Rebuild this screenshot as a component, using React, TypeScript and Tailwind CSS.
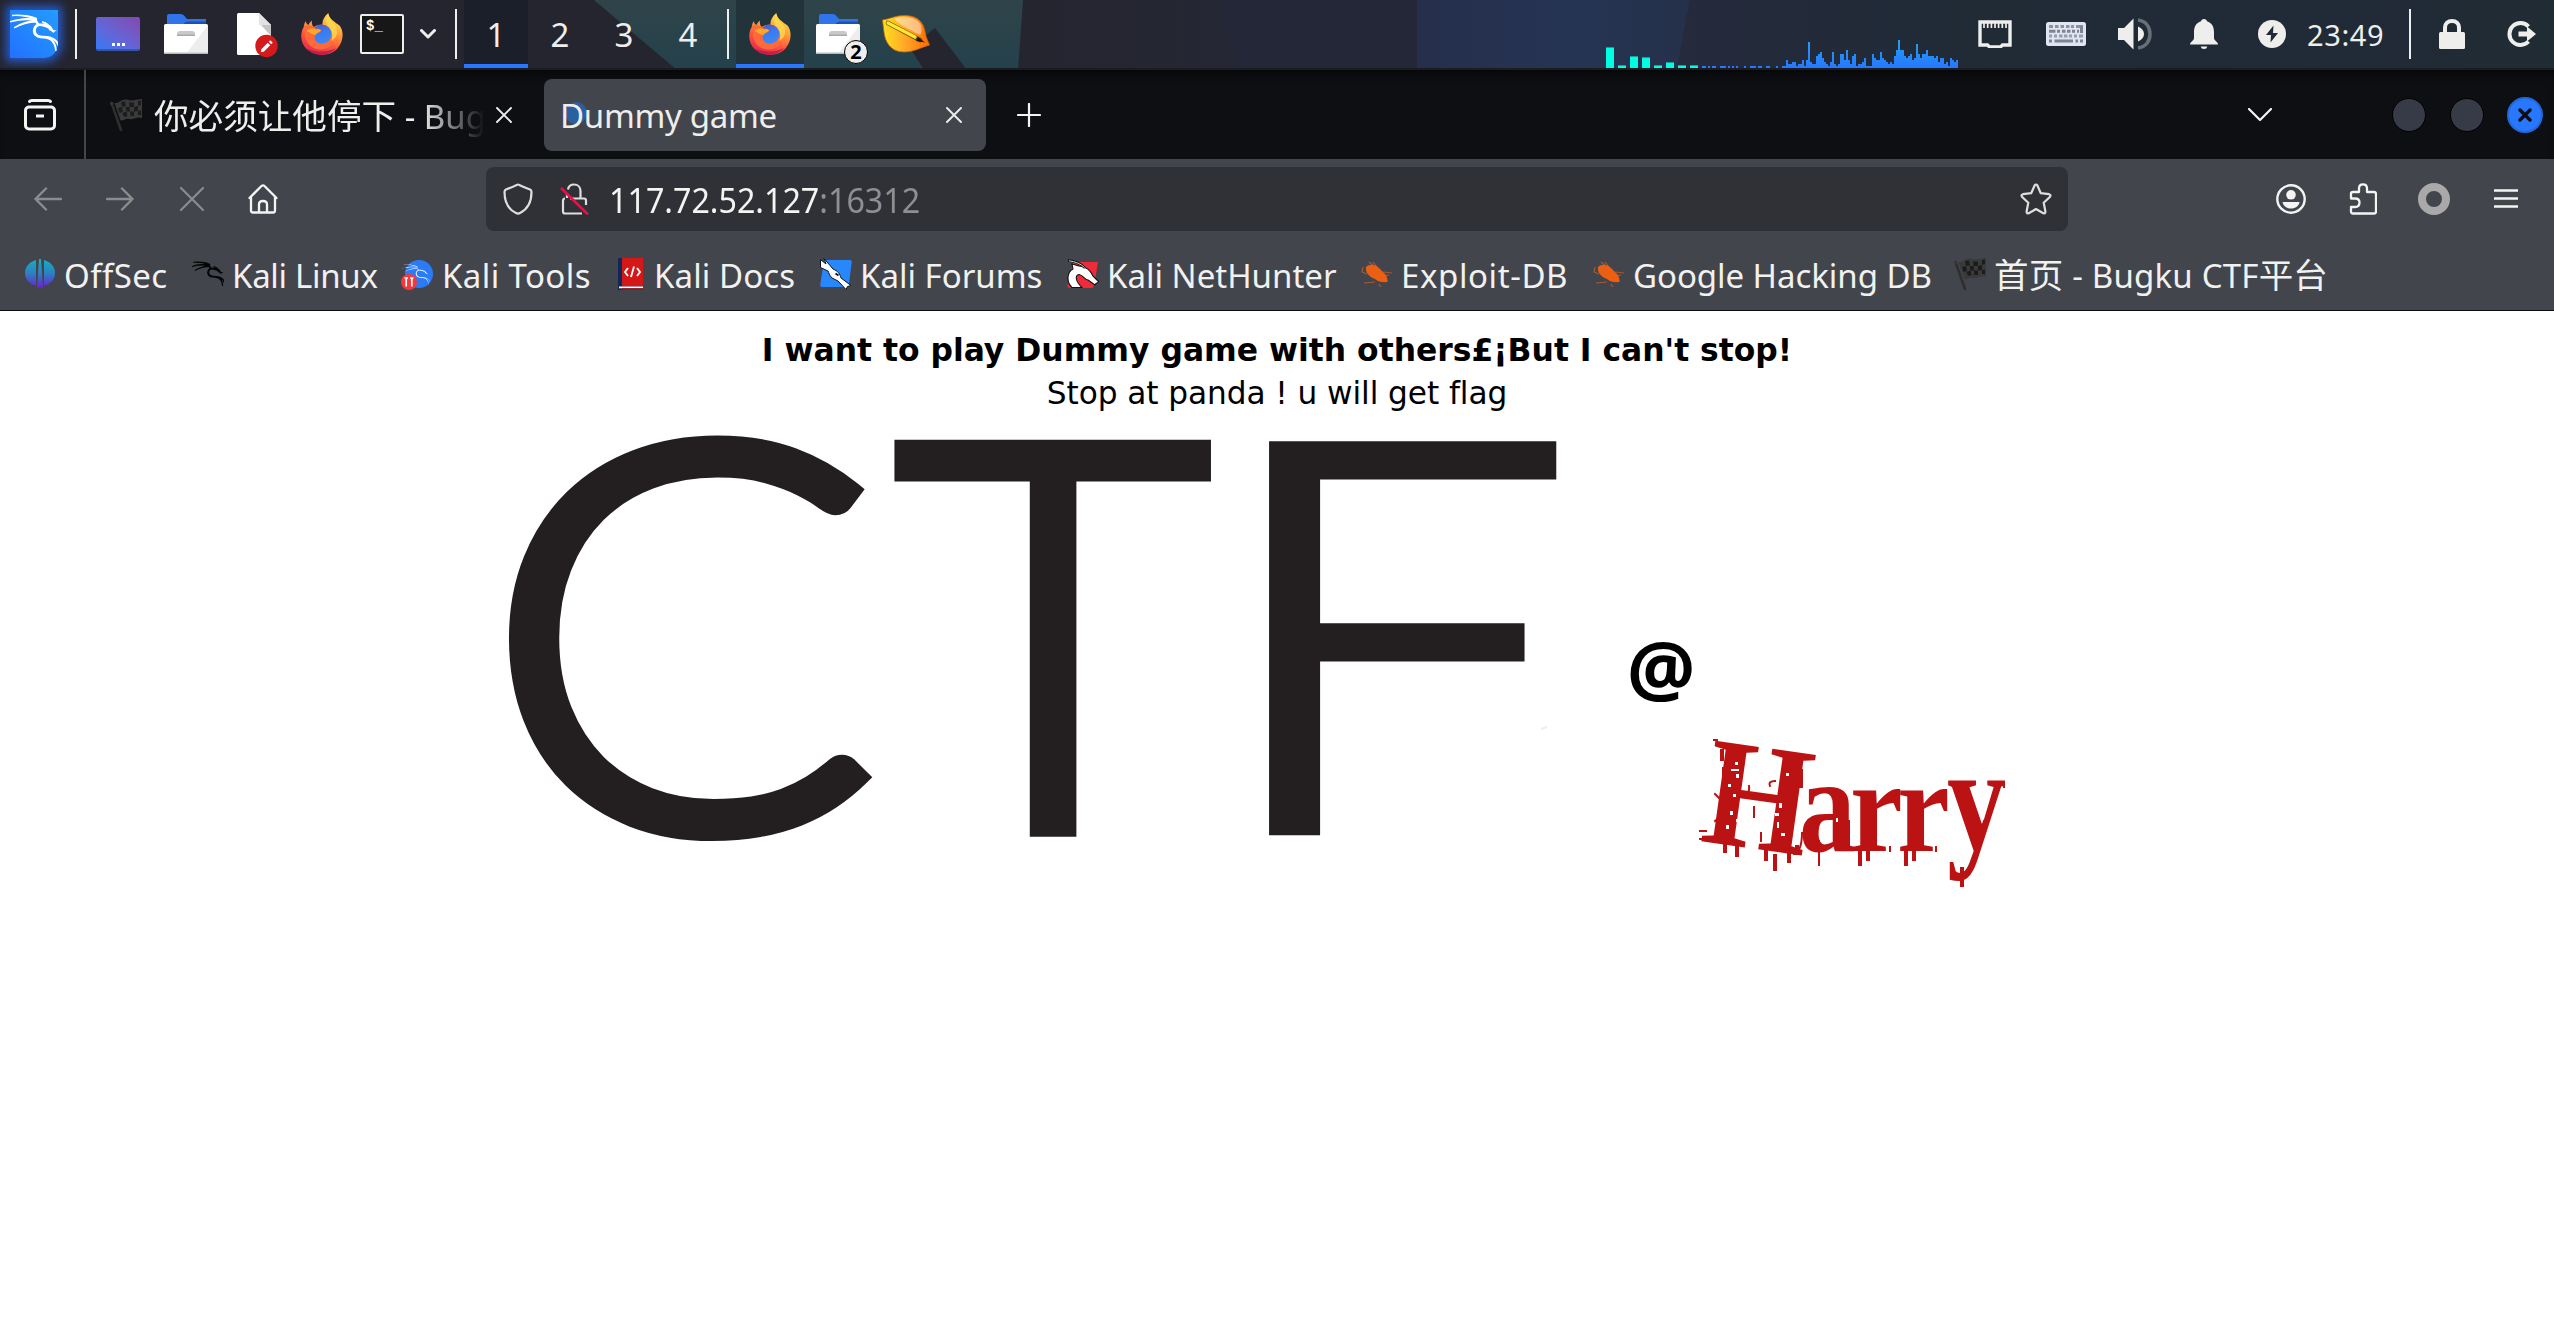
import type { ReactNode } from "react";
import { SiKalilinux } from "react-icons/si";

const UI_FONT = "font-['Noto_Sans','Noto_Sans_CJK_SC',sans-serif]";

/* Heights of the CPU history, one entry per 2px column. */
const LOAD = [
  1, 1, 0, 1, 0, 1, 1, 0, 0, 1, 1, 1, 0, 1, 0, 1, 0, 1, 0, 0, 0, 1, 0, 0, 1, 1, 1, 0, 1, 1, 0, 0, 1, 1, 0, 0, 0, 1, 0, 0, 1, 1,
  4, 2, 2, 3, 3, 1, 2, 2, 4, 1, 4, 13, 3, 2, 2, 6, 7, 8, 5, 3, 2, 1, 3, 8, 2, 1, 2, 7, 7, 4, 9, 4, 2, 6, 7, 1, 2, 2, 3, 5, 1, 1, 1,
  7, 5, 4, 4, 8, 5, 4, 3, 2, 3, 2, 6, 9, 14, 9, 9, 6, 5, 6, 7, 4, 5, 12, 7, 5, 7, 7, 9, 6, 6, 6, 5, 6, 3, 5, 5, 2, 3, 1, 5, 4, 3, 4,
];
const CORES = [21, 3, 12, 11, 3, 6, 3, 3];

function Firefox({ className }: { className?: string }) {
  return (
    <svg viewBox="0 0 42 42" className={className}>
      <defs>
        <linearGradient id="ffBody" x1="0.75" y1="0" x2="0.3" y2="1">
          <stop offset="0" stopColor="#ffe05a" />
          <stop offset="0.35" stopColor="#ffa436" />
          <stop offset="0.65" stopColor="#ff5a3c" />
          <stop offset="1" stopColor="#e0264f" />
        </linearGradient>
        <linearGradient id="ffGlobe" x1="0" y1="0" x2="0.3" y2="1">
          <stop offset="0" stopColor="#5a4fc4" />
          <stop offset="0.5" stopColor="#3a7cf0" />
          <stop offset="1" stopColor="#3f86f2" />
        </linearGradient>
      </defs>
      <path fill="url(#ffBody)" d="M4.7 8C3 11 3 12 2.7 14C-1 20-1 30 6 36.500C14 44 29 43.500 36 36C43 28.500 43 18 38.500 12.500C34 9 28 6 27.300 0C23 3.500 21 8 21.500 12C18 11 15 12.500 13 14C11 13 10.500 10 11 7.500C9 9 8 10.500 7.500 12C6 11 5 10 4.700 8Z" />
      <circle cx="20.700" cy="21.500" r="10" fill="url(#ffGlobe)" />
      <path fill="#ff6a3a" d="M3 13C6 11.500 11 12 14.500 15.500C17 15.500 19.500 16 20 17.500C19 20 15 20 14 22.500C12 27 17 31.500 22 30.500C28 29.500 31 25 30 20C33 24 33 30 28 34C20 39 8 36 5 26C3.500 21 3 17 3 13Z" />
      <path fill="#ffa62b" d="M5.500 18C8 14.500 12 14.500 14.500 16.500C17 16 19.500 16.500 20 17.500C19 19.500 15.500 19.500 14.500 22C11 22 9 19.500 5.500 18Z" />
      <path fill="#ffd84f" opacity="0.8" d="M27.300 1C24 5 24 10 27 13C31 17 32.500 22 30 28C34 26 37 22 36 16C35 10 29 8 27.300 1Z" />
      <path fill="#b5174f" opacity="0.75" d="M5 35C10 38 24 41 35 35C29 43.500 13 44.500 5 35Z" />
    </svg>
  );
}

function Folder({ className }: { className?: string }) {
  return (
    <svg viewBox="0 0 44 40" className={className}>
      <path fill="#2f74ea" d="M3 2Q3 0 5 0H17Q19 0 20 1.500L23 5H42V12H3Z" />
      <path fill="#1d4fae" d="M20 9L23 7.500H42V11H20Z" />
      <rect y="10" width="44" height="30" rx="1.500" fill="#fff" />
      <path fill="#ededed" d="M44 11V38.500H23Z" />
      <rect y="38.500" width="44" height="1.500" rx="0.700" fill="#b9b9bc" />
      <path d="M13 20Q13 17 16 17H28Q31 17 31 20V22H13Z" fill="#c9c9c9" />
      <rect x="13" y="20.500" width="18" height="1.500" fill="#a9a9a9" />
    </svg>
  );
}

function Flag() {
  return (
    <svg viewBox="0 0 32 32" className="h-8 w-8 shrink-0">
      <path d="M1.500 4L11 31" stroke="#2f2f2f" strokeWidth="2.600" strokeLinecap="round" />
      <circle cx="1.800" cy="4.500" r="1.700" fill="#383838" />
      <path fill="#3a3a3a" d="M4.500 4C9 5 12-1 18 1C23 2.500 27 0 32 0V19C27 17 24 21 19 20C15 19 14 22 10.500 21.500Z" />
      <path fill="#1c1c1d" d="M11 3L15 2.500L16 7L12 8ZM19 3.500L24 3.500L24 8L19.500 8ZM28 2L31 1.500V6L28 7ZM15.500 8L19.500 8L20 12.500L16.500 12.500ZM24 8L28 7V12L24 12.500ZM8 9L12 8L13 13L9.500 14ZM12.500 14L16.500 12.500L17.500 17L14 18ZM20 12.500L24 12.500V17L20.500 17ZM28 12L31 11.500V16L28 16Z" />
    </svg>
  );
}

function Taskbar() {
  return (
    <header className="relative h-[70px] overflow-hidden bg-[#25252f]">
      <svg viewBox="0 0 2554 70" className="absolute inset-0 h-[70px] w-full">
        <defs>
          <linearGradient id="teal" x1="0" y1="0" x2="0" y2="1">
            <stop offset="0" stopColor="#2f4449" />
            <stop offset="1" stopColor="#24414c" />
          </linearGradient>
          <linearGradient id="mid" x1="0" x2="1">
            <stop offset="0" stopColor="#25252f" />
            <stop offset="1" stopColor="#232838" />
          </linearGradient>
          <linearGradient id="navy" x1="0" x2="1">
            <stop offset="0" stopColor="#252f4c" />
            <stop offset="0.600" stopColor="#263453" />
            <stop offset="1" stopColor="#25314a" />
          </linearGradient>
          <linearGradient id="slate" x1="0" x2="1">
            <stop offset="0" stopColor="#252a3c" />
            <stop offset="0.350" stopColor="#202b36" />
            <stop offset="0.800" stopColor="#212a37" />
            <stop offset="1" stopColor="#202c33" />
          </linearGradient>
        </defs>
        <rect x="1018" width="400" height="70" fill="url(#mid)" />
        <path fill="url(#teal)" d="M594 0H1023L1018 70H677Z" />
        <path fill="#25252f" d="M935 28L967 70H924L910 48Z" />
        <path fill="#232737" d="M1220 0H1417V70H1240Z" />
        <path fill="url(#navy)" d="M1417 0H1690L1677 70H1417Z" />
        <path fill="url(#slate)" d="M1690 0H2554V70H1677Z" />
        <rect y="68" width="2554" height="2" fill="#1c1d23" />
      </svg>

      <div className="relative flex h-[68px] items-center pl-[10px]">
        <div className="relative h-12 w-12 rounded-br-[14px] bg-linear-to-tr from-[#2470ff] to-[#259cff] shadow-[0_0_10px_4px_rgba(38,110,255,0.75)]">
          <SiKalilinux className="absolute -top-px left-0 h-12 w-12 stroke-white stroke-[0.7] text-white" />
        </div>
        <i className="ml-[17px] h-[50px] w-[2px] bg-[#eeeeec]" />

        <div className="ml-[19px] flex h-[34px] w-11 items-end justify-center gap-[2px] rounded-[2px] border-b-2 border-[#3457a8] bg-linear-to-tr from-[#2e79f5] to-[#8347b0] pb-[3px]">
          <i className="h-[3px] w-[3px] bg-white" />
          <i className="h-[3px] w-[3px] bg-white" />
          <i className="h-[3px] w-[3px] bg-white" />
        </div>
        <Folder className="ml-6 h-10 w-11" />
        <svg viewBox="0 0 41 44" className="ml-[29px] mt-[2px] h-11 w-[41px]">
          <path fill="#fff" d="M1.500 0H22L34 12V42H1.500Q0 42 0 40.500V1.500Q0 0 1.500 0Z" />
          <path fill="#e2e2e2" d="M22 0L34 12H22Z" />
          <path fill="#c4c4c4" d="M24 12H34V23Z" />
          <circle cx="29.500" cy="33" r="11.200" fill="#d41a1a" />
          <path d="M25.500 37.500L32 31" stroke="#fff" strokeWidth="3.600" />
          <path d="M33 30L34.500 28.500" stroke="#fff" strokeWidth="3.600" />
          <path d="M23.800 39.300L24.500 36L27 38.600Z" fill="#fff" />
        </svg>
        <Firefox className="ml-[23px] h-[42px] w-[42px]" />
        <div className="ml-[17px] h-10 w-11 rounded-[2px] border-2 border-[#eeeeec] bg-[#171717] pl-1 pt-[3px] font-['Liberation_Mono',monospace] text-[14px] leading-[14px] font-bold text-white">
          $_
        </div>
        <svg viewBox="0 0 16 10" className="ml-4 h-[10px] w-4">
          <path d="M1.500 1.500L8 8L14.500 1.500" fill="none" stroke="#eeeeec" strokeWidth="3" strokeLinecap="round" strokeLinejoin="round" />
        </svg>
        <i className="ml-[19px] h-[50px] w-[2px] bg-[#eeeeec]" />

        <nav className="ml-[7px] flex h-[68px] text-[33px] text-[#eeeeec]">
          <span className="flex w-16 items-center justify-center border-b-4 border-[#2777ff] bg-[#1b1f29] pt-1.5">1</span>
          <span className="flex w-16 items-center justify-center border-b-4 border-transparent pt-1.5">2</span>
          <span className="flex w-16 items-center justify-center border-b-4 border-transparent pt-1.5">3</span>
          <span className="flex w-16 items-center justify-center border-b-4 border-transparent pt-1.5">4</span>
        </nav>
        <i className="ml-[7px] h-[50px] w-[2px] bg-[#eeeeec]" />

        <div className="ml-[7px] flex h-[68px] w-[68px] items-center justify-center border-b-4 border-[#2777ff] bg-[#22343a] pt-1">
          <Firefox className="h-[42px] w-[42px]" />
        </div>
        <div className="relative flex h-[68px] w-[68px] items-center justify-center">
          <Folder className="h-10 w-11" />
          <span className="absolute left-10 top-10 flex h-6 w-6 items-center justify-center rounded-full border border-black bg-[#eeeeec] text-[20px] leading-none font-bold text-black">
            2
          </span>
        </div>
        <svg viewBox="0 0 48 38" className="ml-[10px] h-[38px] w-12">
          <defs>
            <linearGradient id="leaf" x1="0" y1="0.500" x2="1" y2="0.500">
              <stop offset="0" stopColor="#ffe21f" />
              <stop offset="0.500" stopColor="#ffa528" />
              <stop offset="1" stopColor="#ff6a00" />
            </linearGradient>
          </defs>
          <path fill="url(#leaf)" stroke="#c96a08" strokeWidth="0.800" d="M0.500 5C8 4 14 0 24 0.500C37 1 42 9 43 17C44 23 46 26 47.500 30C40 32 32 37 22 37C8 37 3 26 2 17Z" />
          <path fill="#fff" opacity="0.450" d="M12 4C22 0 34 2 39 10C40 14 40 18 38 20C30 16 18 10 12 4Z" />
          <path d="M6 8L38 25" stroke="#6b4c10" strokeWidth="4.600" strokeLinecap="round" />
          <path d="M6 8L33 22" stroke="#ffe72d" strokeWidth="3.300" strokeLinecap="round" />
          <path d="M36 22L43 27.500L34 26Z" fill="#1c1c1c" />
        </svg>

        <svg viewBox="0 0 352 68" className="ml-[676px] h-[68px] w-[352px]" shapeRendering="crispEdges">
          <defs>
            <linearGradient id="load" gradientUnits="userSpaceOnUse" x1="0" y1="40" x2="0" y2="68">
              <stop offset="0" stopColor="#22a2f2" />
              <stop offset="1" stopColor="#2777ff" />
            </linearGradient>
          </defs>
          {CORES.map((h, i) => (
            <g key={i}>
              <rect x={i * 12} y={68 - h} width="8" height={h} fill="#00ffe0" />
              <rect x={i * 12} y={68 - h} width="8" height="1" fill="#159f97" />
            </g>
          ))}
          {LOAD.map((h, i) => (
            <rect key={i} x={96 + i * 2} y={68 - h * 2} width="2" height={h * 2} fill="url(#load)" />
          ))}
        </svg>

        <svg viewBox="0 0 34 28" className="ml-5 h-7 w-[34px]">
          <path d="M2 2H32V25H24.500L22.500 27H11.500L9.500 25H2Z" fill="none" stroke="#eeeeec" strokeWidth="3.400" />
          <path d="M6 3V8M9.700 3V8M13.400 3V8M17 3V8M20.600 3V8M24.300 3V8M28 3V8" stroke="#eeeeec" strokeWidth="1.700" />
        </svg>
        <svg viewBox="0 0 40 24" className="ml-[34px] h-6 w-10">
          <rect width="40" height="24" rx="2.500" fill="#dfe5f1" />
          <g fill="none" stroke="#7f8493" strokeWidth="3">
            <path d="M3 4.500H7M9 4.500H12.500M14.500 4.500H18M20 4.500H23.500M25 4.500H28M30 4.500H37" strokeOpacity="0.850" />
            <path d="M3 9.200H9.500M11 9.200H14M16 9.200H19.500M21 9.200H24.500M26 9.200H29M31 9.200H33M35.500 4V11" />
            <path d="M3 14H6M8 14H11M13 14H16.500M18 14H21.500M23 14H26M28 14H31M33 14H37" strokeOpacity="0.750" />
            <path d="M3 19H6M8.500 19H27M29.500 19H32M34 19H37" />
          </g>
        </svg>
        <svg viewBox="0 0 34 32" className="ml-8 h-8 w-[34px]">
          <path fill="#eeeeec" d="M0 10H6L15.500 0.500V31.500L6 22H0Z" />
          <path fill="#eeeeec" d="M20 8.500C24 10 26 13 26 16S24 22 20 23.500Z" />
          <path d="M20 2C28 3 32 9 32 16S28 29 20 30" fill="none" stroke="#eeeeec" strokeOpacity="0.350" strokeWidth="3.500" />
        </svg>
        <svg viewBox="0 0 28 30" className="ml-[38px] h-[30px] w-7">
          <path fill="#eeeeec" d="M14 0C15.800 0 16.800 1 17 2.300C22 4 24 8 24 13V19C24 21.500 28 23 28 25.500H0C0 23 4 21.500 4 19V13C4 8 6 4 11 2.300C11.200 1 12.200 0 14 0ZM10.800 27.500H17.200C17 29.200 15.700 30 14 30S11 29.200 10.800 27.500Z" />
        </svg>
        <svg viewBox="0 0 28 28" className="ml-10 h-7 w-7">
          <circle cx="14" cy="14" r="14" fill="#eeeeec" />
          <path fill="#212a36" d="M15.500 5.500L8 15H13L12.500 22.500L20 13H15Z" />
        </svg>
        <span className="ml-[21px] w-[79px] text-[29px] leading-none tracking-[0.6px] whitespace-nowrap text-[#eeeeec]">23:49</span>
        <i className="ml-[23px] h-[50px] w-[2px] bg-[#eeeeec]" />
        <svg viewBox="0 0 26 30" className="ml-7 h-[30px] w-[26px]">
          <rect y="13" width="26" height="17" rx="1.500" fill="#eeeeec" />
          <path d="M6 14V8.500C6 4.500 9 2 13 2S20 4.500 20 8.500V14" fill="none" stroke="#eeeeec" strokeWidth="4" />
        </svg>
        <svg viewBox="0 0 29 26" className="ml-[42px] h-[26px] w-[29px]">
          <path d="M21.500 5.500A11 11 0 1 0 21.500 20.500" fill="none" stroke="#eeeeec" strokeWidth="4" />
          <path fill="#eeeeec" d="M11.500 10.500H20V5.500L29 13L20 20.500V15.500H11.500Z" />
        </svg>
      </div>
    </header>
  );
}

function Cross({ className }: { className?: string }) {
  return (
    <svg viewBox="0 0 16 16" className={className}>
      <path d="M1 1L15 15M15 1L1 15" stroke="currentColor" strokeWidth="1.900" strokeLinecap="round" />
    </svg>
  );
}

function TabStrip() {
  return (
    <div className="flex h-[89px] items-center bg-[#0e0f13] text-[#eeeeec] shadow-[inset_0_10px_10px_-6px_rgba(0,0,0,0.6)]">
      <svg viewBox="0 0 32 32" className="ml-6 h-8 w-8">
        <path d="M5.500 2.500Q6 1.500 8 1.500H24Q26 1.500 26.500 2.500" fill="none" stroke="#f4f4f3" strokeWidth="3" strokeLinecap="round" />
        <rect x="1.500" y="8" width="29" height="22" rx="3.500" fill="none" stroke="#f4f4f3" strokeWidth="3" />
        <rect x="12" y="15.500" width="8" height="3" fill="#f4f4f3" />
      </svg>
      <i className="ml-7 h-full w-[2px] bg-[#44454b]" />
      <div className="ml-6 flex w-[402px] items-center">
        <Flag />
        <span className="ml-3 w-[334px] overflow-hidden pt-[3px] text-[33px] leading-[48px] whitespace-nowrap [mask-image:linear-gradient(to_right,black_80%,transparent_99%)]">
          <span className="text-[34.6px]">你必须让他停下</span> - Bugku CTF
        </span>
        <Cross className="ml-2 h-4 w-4" />
      </div>
      <div className="ml-8 flex h-[72px] w-[442px] items-center rounded-lg bg-[#43454d]">
        <span className="relative ml-4 flex-1 pt-[3px] text-[33px] leading-[48px] tracking-[-0.3px]">
          <i className="absolute left-[5px] top-[13px] h-[22px] w-[22px] rounded-full bg-[#2b5f9d]" />
          <span className="relative">Dummy game</span>
        </span>
        <Cross className="mr-6 h-4 w-4" />
      </div>
      <svg viewBox="0 0 24 24" className="ml-[31px] h-6 w-6">
        <path d="M12 1V23M1 12H23" stroke="#f4f4f3" strokeWidth="2.200" strokeLinecap="round" />
      </svg>
      <svg viewBox="0 0 24 13" className="ml-auto h-[13px] w-6">
        <path d="M1 1L12 12L23 1" fill="none" stroke="#f4f4f3" strokeWidth="2.200" strokeLinecap="round" strokeLinejoin="round" />
      </svg>
      <i className="ml-[120px] h-[34px] w-[34px] rounded-full border border-black bg-[#373b47]" />
      <i className="ml-6 h-[34px] w-[34px] rounded-full border border-black bg-[#373b47]" />
      <span className="mr-[11px] ml-[23px] flex h-9 w-9 items-center justify-center rounded-full border-2 border-[#2268dc] bg-[#2777ff]">
        <svg viewBox="0 0 14 14" className="h-[14px] w-[14px]">
          <path d="M2 2L12 12M12 2L2 12" stroke="#0b0d12" strokeWidth="3.400" strokeLinecap="round" />
        </svg>
      </span>
    </div>
  );
}

function Toolbar() {
  return (
    <div className="flex h-20 items-center bg-[#43454d]">
      <svg viewBox="0 0 28 24" className="ml-[34px] h-6 w-7">
        <path d="M1.500 12H27M12 1.500L1.500 12L12 22.500" fill="none" stroke="#8c8c8f" strokeWidth="2.400" strokeLinecap="round" strokeLinejoin="round" />
      </svg>
      <svg viewBox="0 0 28 24" className="ml-11 h-6 w-7">
        <path d="M26.500 12H1M16 1.500L26.500 12L16 22.500" fill="none" stroke="#8c8c8f" strokeWidth="2.400" strokeLinecap="round" strokeLinejoin="round" />
      </svg>
      <svg viewBox="0 0 24 24" className="ml-[46px] h-6 w-6">
        <path d="M1 1L23 23M23 1L1 23" stroke="#8c8c8f" strokeWidth="2.200" strokeLinecap="round" />
      </svg>
      <svg viewBox="0 0 30 30" className="ml-11 h-[30px] w-[30px]">
        <path d="M1.500 14L13.500 2Q15 0.700 16.500 2L28.500 14M3 13V26.500Q3 28.500 5 28.500H25Q27 28.500 27 26.500V13M11 28V20.500Q11 17 15 17T19 20.500V28" fill="none" stroke="#f4f4f3" strokeWidth="2.300" strokeLinecap="round" strokeLinejoin="round" />
      </svg>
      <div className="ml-52 flex h-16 w-[1582px] items-center rounded-lg bg-[#303136]">
        <svg viewBox="0 0 30 32" className="ml-[17px] h-8 w-[30px]">
          <path d="M15 1.500C16 1.500 17 2.700 27 6.500Q28.500 7.200 28.500 9C28.500 19 25 26 17 30Q15 31.200 13 30C5 26 1.500 19 1.500 9Q1.500 7.200 3 6.500C13 2.700 14 1.500 15 1.500Z" fill="none" stroke="#dededd" strokeWidth="2.200" />
        </svg>
        <svg viewBox="0 0 30 32" className="ml-[27px] h-8 w-[30px]">
          <path d="M8 6.500C8.500 3.500 11 1.500 14 1.500C18 1.500 20.500 4.500 20.500 8V15M10 15.500H24Q26 15.500 26 17.500V22M22 30.500H5Q3 30.500 3 28.500V18Q3 15.500 5 15.500M7 10V15" fill="none" stroke="#dededd" strokeWidth="2.200" />
          <path d="M1 5L28 31.500" stroke="#e5124a" strokeWidth="2.500" />
        </svg>
        <span className="ml-[19px] origin-left scale-x-[0.921] text-[35px] leading-none whitespace-nowrap text-[#f4f4f3]">
          117.72.52.127<span className="text-[#8f8f92]">:16312</span>
        </span>
        <svg viewBox="0 0 32 32" className="mr-4 ml-auto h-8 w-8">
          <path d="M14.600 2.500Q16 0.500 17.400 2.500L20.800 10.200L29 11.200Q31.500 12 29.800 14L23.700 19.800L25.400 28.500Q25.500 30.800 23.300 30.300L16 26L8.700 30.300Q6.500 30.800 6.600 28.500L8.300 19.800L2.200 14Q0.500 12 3 11.200L11.200 10.200Z" fill="none" stroke="#dededd" strokeWidth="2.200" strokeLinejoin="round" />
        </svg>
      </div>
      <svg viewBox="0 0 30 30" className="ml-[208px] h-[30px] w-[30px]">
        <circle cx="15" cy="15" r="13.700" fill="none" stroke="#f4f4f3" strokeWidth="2.400" />
        <circle cx="15" cy="10.800" r="4.800" fill="#f4f4f3" />
        <path d="M6.500 18H23.500C23 22 19.500 24.500 15 24.500S7 22 6.500 18Z" fill="#f4f4f3" />
      </svg>
      <svg viewBox="0 0 28 32" className="ml-[43px] h-8 w-7">
        <path d="M2 10.500Q2 9 4 9H10V5.500C10 2.500 11.500 1.300 14 1.300S18 2.500 18 5.500V9H25Q27 9 27 11V28.500Q27 30.500 25 30.500H4Q2 30.500 2 28.500V24H6C9 24 10.500 22 10.500 19.500S9 15.500 6 15.500H2Z" fill="none" stroke="#f4f4f3" strokeWidth="2.300" strokeLinejoin="round" />
      </svg>
      <i className="ml-[41px] h-8 w-8 rounded-full border-8 border-[#a9a9aa]" />
      <svg viewBox="0 0 24 20" className="mr-9 ml-auto h-5 w-6">
        <path d="M0 1.500H24M0 9.500H24M0 17.500H24" stroke="#f4f4f3" strokeWidth="2.300" />
      </svg>
    </div>
  );
}

function Bug() {
  return (
    <svg viewBox="0 0 32 32" className="h-8 w-8 shrink-0">
      <path d="M8 4L14 9M2 9L1 14L6 16M22 14L31 15M18 26L20 29M3 25L14 24M12 4L16 9M24 18L28 17" stroke="#a35a38" strokeWidth="1.200" fill="none" />
      <path fill="#ea5f12" d="M5 9C8 6 14 6 18 10C20 12 22 14 25 17C26 20 27 22 26.500 24C22 24.500 17 24 14 21C9 19 4 15 5 9Z" />
    </svg>
  );
}

const OffSecIcon = (
  <svg viewBox="0 0 32 32" className="h-8 w-8 shrink-0">
    <defs>
      <linearGradient id="off" x1="0" y1="0" x2="0" y2="1" gradientUnits="userSpaceOnUse" gradientTransform="scale(32)">
        <stop offset="0" stopColor="#12b5c4" />
        <stop offset="0.500" stopColor="#2f7cc0" />
        <stop offset="1" stopColor="#7412d8" />
      </linearGradient>
    </defs>
    <g fill="url(#off)">
      <path d="M12 2V28C5 26 1 21 1 15S5 4 12 2Z" />
      <path d="M20 2V28C27 26 31 21 31 15S27 4 20 2Z" />
      <path d="M15 1H17L19 30H13Z" />
    </g>
  </svg>
);

const ToolsIcon = (
  <span className="relative h-8 w-8 shrink-0">
    <i className="absolute top-[2px] left-[3px] h-7 w-7 rounded-full bg-[#2b7bf6]" />
    <SiKalilinux className="absolute top-[3px] left-0 h-7 w-7 text-white" />
    <svg viewBox="0 0 16 16" className="absolute top-4 -left-px h-4 w-4">
      <circle cx="8" cy="8" r="8" fill="#f8373a" />
      <path d="M3.500 4H7M5.200 4V12.500M9 4H12.500M10.800 4V12.500" stroke="#fff" strokeWidth="1.700" />
    </svg>
  </span>
);

const DocsIcon = (
  <svg viewBox="0 0 32 32" className="h-8 w-8 shrink-0">
    <rect x="4" width="25" height="32" fill="#10275a" />
    <rect x="8" width="21" height="28.500" fill="#d41717" />
    <rect x="5" y="28.500" width="24" height="1.800" fill="#fff" />
    <rect x="8" y="30.300" width="21" height="1.700" fill="#a31010" />
    <path d="M14 10L11 14L14 18M23 10L26 14L23 18M20 8.500L17 19" fill="none" stroke="#fff" strokeWidth="1.900" />
  </svg>
);

const ForumsIcon = (
  <svg viewBox="0 0 32 32" className="h-8 w-8 shrink-0">
    <path fill="#2787fb" d="M4 2H30Q32 2 31.700 4L29 26Q28.500 29 26 29H2Q0 29 0.200 27Z" />
    <path fill="#fff" stroke="#0d1420" strokeWidth="1" strokeLinejoin="round" d="M0.500 1.500L6 6L4 0.500L13 11C18 13 20 16 21 20L31 27.500L27.500 28.500L26 31.500L18 23L12 20C9 17 9 15 8 13L0.500 9.500Z" />
    <path d="M15.500 15.500L18.500 17.500" stroke="#0d1420" strokeWidth="1.800" />
  </svg>
);

const HunterIcon = (
  <svg viewBox="0 0 32 32" className="h-8 w-8 shrink-0">
    <path fill="#ee2b3a" d="M6 4H31L27 28Q26.500 30 24 30H3Q0 30 0.500 27Z" />
    <path fill="#fff" stroke="#101010" strokeWidth="1.100" strokeLinejoin="round" d="M5 6L12 8C19 8 24 13 26 18L32 24L29 25.500L28 27L21 22C18 22 16 17 12 16.500C8 17 8 23 15 29.500H5C-1 24 0 14 6 11Z" />
    <path d="M1 2.500C8 3 14 6 18 10" fill="none" stroke="#101010" strokeWidth="2.400" />
    <path d="M2 2.800C8 3.500 14 6 17.500 9.500" fill="none" stroke="#fff" strokeWidth="0.800" />
  </svg>
);

function Bookmark({ icon, width, children }: { icon: ReactNode; width: number; children: ReactNode }) {
  return (
    <div className="flex shrink-0 items-center gap-2" style={{ width }}>
      {icon}
      <span className="pt-[3px] text-[33px] leading-[48px] whitespace-nowrap">{children}</span>
    </div>
  );
}

function Bookmarks() {
  return (
    <div className="flex h-[72px] items-center border-b border-[#0c0c0d] bg-[#43454d] pb-[1px] pl-6 text-[#f1f1f0]">
      <Bookmark width={168} icon={OffSecIcon}>
        <span className="tracking-[0.4px]">OffSec</span>
      </Bookmark>
      <Bookmark width={210} icon={<SiKalilinux className="h-8 w-8 shrink-0 stroke-[#050505] stroke-[0.8] text-[#050505]" />}>
        <span className="tracking-[-0.3px]">Kali Linux</span>
      </Bookmark>
      <Bookmark width={212} icon={ToolsIcon}>
        <span className="tracking-[0.4px]">Kali Tools</span>
      </Bookmark>
      <Bookmark width={206} icon={DocsIcon}>
        <span className="tracking-[0.1px]">Kali Docs</span>
      </Bookmark>
      <Bookmark width={247} icon={ForumsIcon}>Kali Forums</Bookmark>
      <Bookmark width={294} icon={HunterIcon}>Kali NetHunter</Bookmark>
      <Bookmark width={232} icon={<Bug />}>
        <span className="tracking-[0.6px]">Exploit-DB</span>
      </Bookmark>
      <Bookmark width={361} icon={<Bug />}>
        <span className="tracking-[-0.05px]">Google Hacking DB</span>
      </Bookmark>
      <Bookmark width={400} icon={<Flag />}>
        <span className="tracking-[0.2px]">
          <span className="text-[34.5px]">首页</span> - Bugku CTF<span className="text-[34.5px]">平台</span>
        </span>
      </Bookmark>
    </div>
  );
}

function Artwork() {
  return (
    <svg viewBox="0 414 2554 500" className="block h-[500px] w-full">
      <g fill="#231f20" stroke="#231f20" strokeLinejoin="miter" fontFamily="Lato, sans-serif" fontWeight="300" fontSize="535">
        <text transform="translate(485 826.500) scale(1.085 1)" strokeWidth="18.500">C</text>
        <text transform="translate(896 826.500) scale(1.012 1)" strokeWidth="18.500">T</text>
        <text transform="translate(1212 826.500) scale(1.185 1)" strokeWidth="15.500">F</text>
      </g>
      <text x="1627" y="694.500" fontFamily="'Noto Sans', sans-serif" fontWeight="700" fontSize="76" fill="#000">@</text>
      <g fill="#bb1313" fontFamily="'Liberation Serif', serif" fontWeight="700">
        <text transform="translate(1699 840) rotate(8) scale(0.880 1)" fontSize="155">H</text>
        <text transform="translate(1799 850) scale(0.840 1)" fontSize="135">a</text>
        <text transform="translate(1850 850) scale(0.900 1)" fontSize="132">r</text>
        <text transform="translate(1897 850) scale(0.900 1)" fontSize="132">r</text>
        <text transform="translate(1947 848) scale(0.800 1)" fontSize="148">y</text>
      </g>
      <g fill="none" stroke="#bb1313" strokeLinecap="square">
        <path strokeWidth="4" d="M1725 838V850M1737 845V854M1766 850V858M1775 855V868M1789 852V860M1797 846V852M1860 850V863M1868 850V858M1906 850V863M1914 850V858M1962 868V884M1722 750V758M1724 768V774M1801 770V785" />
        <path strokeWidth="2" d="M1714 739H1717M1700 830H1706M1819 840V864M1849 820V844M1715 793L1722 800M1715 820L1725 812M1745 795Q1750 792 1749 785M1754 806V816M1770 785Q1768 780 1775 780M1793 800L1797 794M1761 832V840M1802 832Q1802 850 1794 853M1890 846V850M1936 846V850M1998 783H2004V786M1984 820L1978 838M1700 838H1712" />
      </g>
      <g fill="#fff">
        <rect x="1735" y="761" width="3" height="3" />
        <rect x="1731" y="768" width="8" height="2" />
        <rect x="1736" y="773" width="3" height="4" />
        <rect x="1728" y="783" width="3" height="3" />
        <rect x="1733" y="793" width="3" height="3" />
        <rect x="1730" y="810" width="3" height="4" />
        <rect x="1736" y="818" width="4" height="3" />
        <rect x="1726" y="824" width="3" height="4" />
        <rect x="1786" y="772" width="3" height="3" />
        <rect x="1779" y="802" width="3" height="5" />
        <rect x="1775" y="812" width="4" height="3" />
        <rect x="1777" y="821" width="2" height="6" />
        <rect x="1781" y="832" width="4" height="3" />
        <rect x="1836" y="817" width="2" height="4" />
      </g>
      <path d="M1541 728L1547 726" stroke="#ededed" strokeWidth="2" />
    </svg>
  );
}

export default function App() {
  return (
    <div className={`h-[1340px] w-[2554px] overflow-hidden bg-white ${UI_FONT}`}>
      <Taskbar />
      <TabStrip />
      <Toolbar />
      <Bookmarks />
      <main className="bg-white pt-[18px] text-center font-['DejaVu_Sans',sans-serif] text-[31.4px] leading-[43px] text-black">
        <h1 className="font-bold">I want to play Dummy game with others£¡But I can't stop!</h1>
        <p className="text-[31.2px] tracking-[-0.08px]">Stop at panda ! u will get flag</p>
        <Artwork />
      </main>
    </div>
  );
}
